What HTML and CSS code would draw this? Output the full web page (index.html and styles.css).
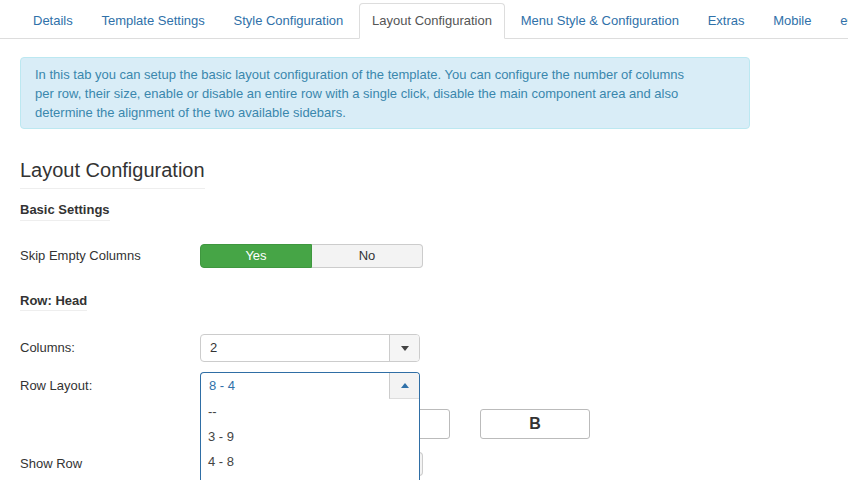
FILE: index.html
```html
<!DOCTYPE html>
<html lang="en">
  <head>
    <meta charset="UTF-8" />
    <meta name="viewport" content="width=device-width, initial-scale=1.0" />
    <link rel="stylesheet" href="styles.css">
    <title>Template Layout Configuration</title>
  </head>
  <body>
    <ul class="tabs">
      <li><a href="#">Details</a></li>
      <li><a href="#">Template Settings</a></li>
      <li><a href="#">Style Configuration</a></li>
      <li class="active"><a href="#">Layout Configuration</a></li>
      <li><a href="#">Menu Style &amp; Configuration</a></li>
      <li><a href="#">Extras</a></li>
      <li><a href="#">Mobile</a></li>
      <li><a href="#">eCommerce</a></li>
    </ul>

    <div class="page">
      <div class="alert">
        In this tab you can setup the basic layout configuration of the template. You can configure the number of columns<br>
        per row, their size, enable or disable an entire row with a single click, disable the main component area and also<br>
        determine the alignment of the two available sidebars.
      </div>

      <h2 class="title">Layout Configuration</h2>

      <h4 class="group first">Basic Settings</h4>
      <div class="field skip">
        <label>Skip Empty Columns</label>
        <div class="switch">
          <span class="on">Yes</span>
          <span class="off">No</span>
        </div>
      </div>

      <h4 class="group">Row: Head</h4>
      <div class="field columns">
        <label>Columns:</label>
        <div class="select">
          <span class="value">2</span>
          <span class="arrow">
            <svg width="8" height="5" viewBox="0 0 8 5"><path d="M0 0h8L4 5z" fill="#444"/></svg>
          </span>
        </div>
      </div>

      <div class="field layout">
        <label>Row Layout:</label>
        <div class="select open">
          <span class="value">8 - 4</span>
          <span class="arrow">
            <svg width="8" height="5" viewBox="0 0 8 5"><path d="M0 5h8L4 0z" fill="#3071a9"/></svg>
          </span>
          <ul class="drop">
            <li>--</li>
            <li>3 - 9</li>
            <li>4 - 8</li>
            <li>6 - 6</li>
            <li>8 - 4</li>
            <li>9 - 3</li>
          </ul>
        </div>
      </div>

      <div class="field cols">
        <span class="col wide">A</span>
        <span class="col">B</span>
      </div>

      <div class="field show">
        <label>Show Row</label>
        <div class="switch">
          <span class="on">Yes</span>
          <span class="off">No</span>
        </div>
      </div>
    </div>
  </body>
</html>
```

FILE: styles.css
```css
html,
body {
  margin: 0;
  height: 480px;
  overflow: hidden;
}
body {
  font-family: "Liberation Sans", Arial, sans-serif;
  font-size: 13px;
  line-height: 18px;
  color: #333;
  background-color: #fff;
}

/* tabs */
.tabs {
  display: flex;
  margin: 0;
  padding: 3px 0 0 20px;
  list-style: none;
  white-space: nowrap;
  border-bottom: 1px solid #ddd;
}
.tabs li {
  margin: 0 2.7px -1px 0;
}
.tabs a {
  display: block;
  padding: 8px 12px;
  line-height: 18px;
  border: 1px solid transparent;
  border-radius: 4px 4px 0 0;
  color: #3071a9;
  text-decoration: none;
}
.tabs .active a {
  color: #555;
  background-color: #fff;
  border-color: #ddd #ddd transparent;
}

.page {
  padding: 0 20px;
}

.alert {
  width: 730px;
  box-sizing: border-box;
  margin-top: 18px;
  padding: 7px 35px 6px 14px;
  line-height: 19px;
  color: #3a87ad;
  background-color: #d9edf7;
  border: 1px solid #bce8f1;
  border-radius: 4px;
}

.title {
  width: fit-content;
  margin: 29px 0 0;
  padding-bottom: 6px;
  font-size: 20px;
  line-height: 24px;
  font-weight: normal;
  border-bottom: 1px solid #eee;
}

.group {
  width: fit-content;
  margin: 24px 0 0;
  padding-bottom: 0;
  font-size: 13px;
  line-height: 18px;
  font-weight: bold;
  border-bottom: 1px solid #eee;
}
.group.first {
  margin-top: 12px;
  padding-bottom: 1px;
}

/* form rows */
.field {
  display: flex;
  align-items: center;
}
.field label {
  width: 180px;
  flex-shrink: 0;
}
.skip {
  margin-top: 23px;
}
.columns {
  margin-top: 23px;
}
.layout {
  margin-top: 10px;
  position: relative;
  z-index: 2;
}
.cols {
  margin-top: 10px;
  padding-left: 180px;
}
.show {
  margin-top: 13px;
}

/* yes / no switch */
.switch {
  display: flex;
  width: 223px;
  height: 24px;
}
.switch span {
  flex: 1;
  display: flex;
  align-items: center;
  justify-content: center;
  border: 1px solid #ccc;
  background-color: #f3f3f3;
}
.switch .on {
  color: #fff;
  background-color: #46a546;
  border-color: #3f973f;
  border-radius: 4px 0 0 4px;
}
.switch .off {
  border-left: none;
  border-radius: 0 4px 4px 0;
}

/* select */
.select {
  position: relative;
  display: flex;
  width: 220px;
  height: 28px;
  box-sizing: border-box;
  border: 1px solid #ccc;
  border-radius: 4px;
  background-color: #fff;
}
.select .value {
  flex: 1;
  display: flex;
  align-items: center;
  padding-left: 9px;
}
.select .arrow {
  width: 29px;
  display: flex;
  align-items: center;
  justify-content: center;
  background-color: #f5f5f5;
  border-left: 1px solid #ccc;
  border-radius: 0 3px 3px 0;
}
.select.open {
  height: 27px;
  border-color: #2f6ea5;
  border-bottom: none;
  border-radius: 4px 4px 0 0;
}
.select.open .value {
  color: #3071a9;
  padding-left: 8px;
}
.select.open .arrow {
  background-color: #f3f3f3;
  border-bottom: 1px solid #ddd;
  border-radius: 0 3px 0 0;
}
.drop {
  position: absolute;
  top: 26px;
  left: -1px;
  right: -1px;
  margin: 0;
  padding: 0;
  list-style: none;
  background-color: #fff;
  border: 1px solid #2f6ea5;
  border-top: none;
}
.drop li {
  height: 25px;
  line-height: 25px;
  padding-left: 7px;
  color: #444;
}

/* column boxes */
.col {
  display: flex;
  align-items: center;
  justify-content: center;
  width: 110px;
  height: 30px;
  box-sizing: border-box;
  border: 1px solid #bbb;
  border-radius: 3px;
  font-size: 16px;
  font-weight: bold;
  margin-left: 30px;
}
.col.wide {
  width: 250px;
  margin-left: 0;
}
```
